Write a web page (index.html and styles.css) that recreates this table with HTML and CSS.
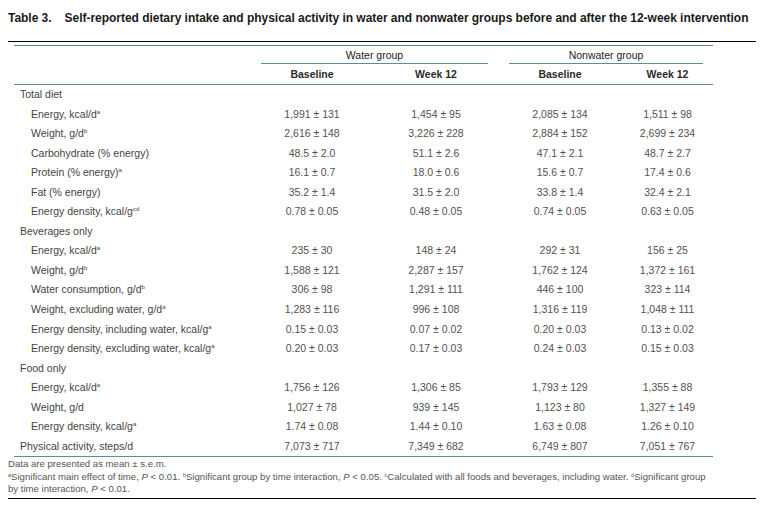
FILE: index.html
```html
<!DOCTYPE html>
<html lang="en">
<head>
<meta charset="utf-8">
<title>Table 3</title>
<link rel="stylesheet" href="styles.css">
</head>
<body>
<div class="page">
  <h1 class="title"><span class="num">Table 3.</span>Self-reported dietary intake and physical activity in water and nonwater groups before and after the 12-week intervention</h1>
  <div class="rule"></div>
  <div class="table-wrap">
    <table class="data">
      <colgroup>
        <col class="c-label">
        <col class="c-val">
        <col class="c-val">
        <col class="c-val">
        <col class="c-last">
      </colgroup>
      <thead>
        <tr class="grp">
          <th></th>
          <th colspan="2"><div class="grp-label">Water group</div></th>
          <th colspan="2"><div class="grp-label">Nonwater group</div></th>
        </tr>
        <tr class="sub">
          <th></th>
          <th>Baseline</th>
          <th>Week 12</th>
          <th>Baseline</th>
          <th>Week 12</th>
        </tr>
      </thead>
      <tbody>
        <tr class="section"><td>Total diet</td><td></td><td></td><td></td><td></td></tr>
        <tr><td class="item">Energy, kcal/d<sup>a</sup></td><td>1,991 ± 131</td><td>1,454 ± 95</td><td>2,085 ± 134</td><td>1,511 ± 98</td></tr>
        <tr><td class="item">Weight, g/d<sup>b</sup></td><td>2,616 ± 148</td><td>3,226 ± 228</td><td>2,884 ± 152</td><td>2,699 ± 234</td></tr>
        <tr><td class="item">Carbohydrate (% energy)</td><td>48.5 ± 2.0</td><td>51.1 ± 2.6</td><td>47.1 ± 2.1</td><td>48.7 ± 2.7</td></tr>
        <tr><td class="item">Protein (% energy)<sup>a</sup></td><td>16.1 ± 0.7</td><td>18.0 ± 0.6</td><td>15.6 ± 0.7</td><td>17.4 ± 0.6</td></tr>
        <tr><td class="item">Fat (% energy)</td><td>35.2 ± 1.4</td><td>31.5 ± 2.0</td><td>33.8 ± 1.4</td><td>32.4 ± 2.1</td></tr>
        <tr><td class="item">Energy density, kcal/g<sup>cd</sup></td><td>0.78 ± 0.05</td><td>0.48 ± 0.05</td><td>0.74 ± 0.05</td><td>0.63 ± 0.05</td></tr>
        <tr class="section"><td>Beverages only</td><td></td><td></td><td></td><td></td></tr>
        <tr><td class="item">Energy, kcal/d<sup>a</sup></td><td>235 ± 30</td><td>148 ± 24</td><td>292 ± 31</td><td>156 ± 25</td></tr>
        <tr><td class="item">Weight, g/d<sup>b</sup></td><td>1,588 ± 121</td><td>2,287 ± 157</td><td>1,762 ± 124</td><td>1,372 ± 161</td></tr>
        <tr><td class="item">Water consumption, g/d<sup>b</sup></td><td>306 ± 98</td><td>1,291 ± 111</td><td>446 ± 100</td><td>323 ± 114</td></tr>
        <tr><td class="item">Weight, excluding water, g/d<sup>a</sup></td><td>1,283 ± 116</td><td>996 ± 108</td><td>1,316 ± 119</td><td>1,048 ± 111</td></tr>
        <tr><td class="item">Energy density, including water, kcal/g<sup>a</sup></td><td>0.15 ± 0.03</td><td>0.07 ± 0.02</td><td>0.20 ± 0.03</td><td>0.13 ± 0.02</td></tr>
        <tr><td class="item">Energy density, excluding water, kcal/g<sup>a</sup></td><td>0.20 ± 0.03</td><td>0.17 ± 0.03</td><td>0.24 ± 0.03</td><td>0.15 ± 0.03</td></tr>
        <tr class="section"><td>Food only</td><td></td><td></td><td></td><td></td></tr>
        <tr><td class="item">Energy, kcal/d<sup>a</sup></td><td>1,756 ± 126</td><td>1,306 ± 85</td><td>1,793 ± 129</td><td>1,355 ± 88</td></tr>
        <tr><td class="item">Weight, g/d</td><td>1,027 ± 78</td><td>939 ± 145</td><td>1,123 ± 80</td><td>1,327 ± 149</td></tr>
        <tr><td class="item">Energy density, kcal/g<sup>a</sup></td><td>1.74 ± 0.08</td><td>1.44 ± 0.10</td><td>1.63 ± 0.08</td><td>1.26 ± 0.10</td></tr>
        <tr class="section last"><td>Physical activity, steps/d</td><td>7,073 ± 717</td><td>7,349 ± 682</td><td>6,749 ± 807</td><td>7,051 ± 767</td></tr>
      </tbody>
    </table>
  </div>
  <div class="notes">
    <p>Data are presented as mean ± s.e.m.</p>
    <p><sup>a</sup>Significant main effect of time, <i>P</i> &lt; 0.01. <sup>b</sup>Significant group by time interaction, <i>P</i> &lt; 0.05. <sup>c</sup>Calculated with all foods and beverages, including water. <sup>d</sup>Significant group<br>by time interaction, <i>P</i> &lt; 0.01.</p>
  </div>
  <div class="rule rule-bottom"></div>
</div>
</body>
</html>
```
FILE: styles.css
```css
html, body {
  margin: 0;
  padding: 0;
  background: #ffffff;
}

body {
  font-family: "Liberation Sans", Arial, Helvetica, sans-serif;
  color: #4d4d4d;
}

.page {
  padding: 10px 6px 0 8px;
}

.title {
  margin: 0;
  font-size: 12px;
  line-height: 16px;
  font-weight: bold;
  color: #1a1a1a;
  white-space: nowrap;
  letter-spacing: -0.03px;
}

.title .num {
  margin-right: 13px;
}

.rule {
  border-top: 1px solid #000000;
  margin-top: 15px;
}

.table-wrap {
  padding: 3px 0 0 6px;
}

.data {
  width: 699px;
  table-layout: fixed;
  border-collapse: separate;
  border-spacing: 0;
  font-size: 10.5px;
}

.c-label { width: 236px; }
.c-val { width: 124px; }
.c-last { width: 91px; }

.data th {
  padding: 0;
  font-weight: normal;
  color: #222222;
  text-align: center;
}

.grp th {
  border-top: 1px solid #5b8d9e;
  padding: 1px 10px 0 11px;
  vertical-align: top;
}

.grp-label {
  line-height: 16px;
  border-bottom: 1px solid #5b8d9e;
}

.sub th {
  height: 20px;
  line-height: 20px;
  font-weight: bold;
  color: #2a2a2a;
  border-bottom: 1px solid #5b8d9e;
}

.data td {
  height: 19.55px;
  padding: 0;
  line-height: 19.55px;
  text-align: center;
  color: #525252;
  white-space: nowrap;
}

.data td:first-child {
  text-align: left;
  padding-left: 6px;
  color: #444444;
}

.data td.item {
  padding-left: 17px;
}

.data tr.last td {
  border-bottom: 1px solid #5b8d9e;
}

sup {
  font-size: 6px;
  line-height: 0;
  vertical-align: 4px;
}

.notes {
  margin-top: 1px;
  font-size: 9.6px;
  line-height: 12.5px;
  color: #555555;
}

.notes p {
  margin: 0;
}

.notes sup {
  font-size: 5.5px;
  vertical-align: 3px;
}

.rule-bottom {
  margin-top: 2px;
}
```
